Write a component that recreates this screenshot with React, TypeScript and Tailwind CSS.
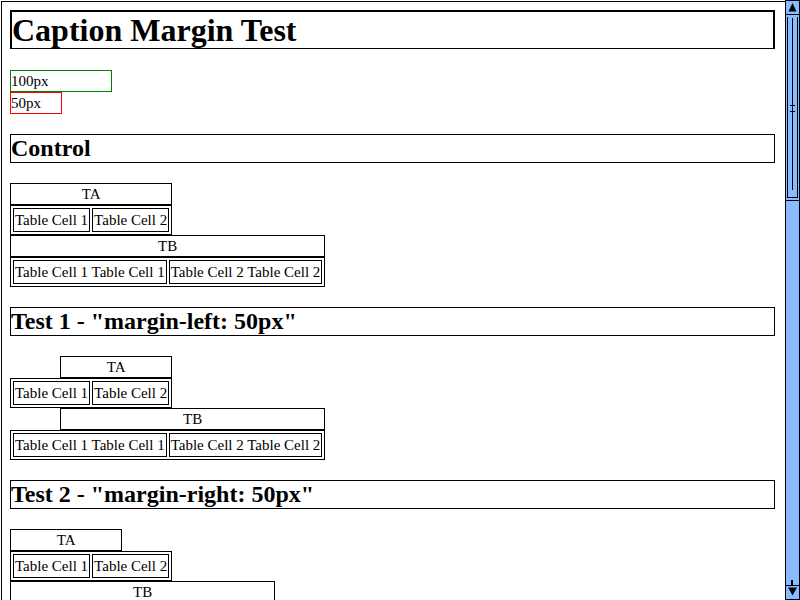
type CaptionMode = 'none' | 'left' | 'right';

const sections: { title: string; mode: CaptionMode }[] = [
  { title: 'Control', mode: 'none' },
  { title: 'Test 1 - "margin-left: 50px"', mode: 'left' },
  { title: 'Test 2 - "margin-right: 50px"', mode: 'right' },
];

const tables = [
  { caption: 'TA', cells: ['Table Cell 1', 'Table Cell 2'] },
  { caption: 'TB', cells: ['Table Cell 1 Table Cell 1', 'Table Cell 2 Table Cell 2'] },
];

function CaptionedTable({
  caption,
  cells,
  mode,
}: {
  caption: string;
  cells: string[];
  mode: CaptionMode;
}) {
  const margin = mode === 'left' ? 'ml-[50px]' : mode === 'right' ? 'mr-[50px]' : '';

  return (
    <div className="flex w-fit flex-col">
      <div className={`h-[22px] border border-black text-center leading-[20px] ${margin}`}>
        {caption}
      </div>
      <table className="border-separate border-spacing-[2px] border border-black">
        <tbody>
          <tr>
            {cells.map((cell, i) => (
              <td key={i} className="border border-black p-px leading-[20px] whitespace-nowrap">
                {cell}
              </td>
            ))}
          </tr>
        </tbody>
      </table>
    </div>
  );
}

function Scrollbar() {
  return (
    <div className="flex h-[600px] w-[15px] shrink-0 flex-col border border-black bg-[#88bbff]">
      {/* up button */}
      <div className="h-[14px] shrink-0 border-b border-black">
        <svg width="13" height="13" viewBox="0 0 13 13" className="block">
          <polygon points="2.5,10.5 6.5,2 10.5,10.5" fill="#000" />
        </svg>
      </div>

      {/* thumb */}
      <div className="h-[186px] shrink-0 border-b border-black">
        <svg width="13" height="185" viewBox="0 0 13 185" className="block" shapeRendering="crispEdges">
          <rect x="1" y="2" width="1" height="181" fill="#000" />
          <rect x="11" y="2" width="1" height="181" fill="#000" />
          <rect x="1" y="182" width="11" height="1" fill="#000" />
          <rect x="6" y="3" width="1" height="172" fill="#000" />
          <rect x="4" y="90" width="5" height="1" fill="#000" />
          <rect x="4" y="96" width="5" height="1" fill="#000" />
        </svg>
      </div>

      {/* track */}
      <div className="flex flex-1 flex-col justify-end">
        <div className="ml-[5px] h-[5px] w-[2px] bg-black" />
      </div>

      {/* down button */}
      <div className="h-[14px] shrink-0 border-t border-black">
        <svg width="13" height="13" viewBox="0 0 13 13" className="block">
          <polygon points="2,1.5 11,1.5 6.5,9.5" fill="#000" />
        </svg>
      </div>
    </div>
  );
}

export default function App() {
  return (
    <div
      className="flex h-[600px] w-[800px] overflow-hidden bg-white text-[15px] text-black"
      style={{ fontFamily: '"Liberation Serif", "Times New Roman", serif' }}
    >
      <div className="h-[600px] flex-1 pl-px pt-px">
        <div className="h-full overflow-hidden border-l border-t border-black pt-2 pr-[10px] pl-2">
          {/* ── Page title ── */}
          <h1 className="mb-[21px] border-x-2 border-t-2 border-b border-black text-[32px] font-bold leading-[36px]">
            Caption Margin Test
          </h1>

          {/* ── Legend ── */}
          <div className="mb-[20px] flex flex-col">
            <div className="h-[22px] w-[102px] border border-[#008000] leading-[20px]">100px</div>
            <div className="h-[22px] w-[52px] border border-[#ff0000] leading-[20px]">50px</div>
          </div>

          {/* ── Test sections ── */}
          {sections.map((section) => (
            <div key={section.title} className="mb-[20px]">
              <h2 className="mb-[20px] border border-black text-[24px] font-bold leading-[27px]">
                {section.title}
              </h2>
              <div className="flex flex-col items-start">
                {tables.map((t) => (
                  <CaptionedTable
                    key={t.caption}
                    caption={t.caption}
                    cells={t.cells}
                    mode={section.mode}
                  />
                ))}
              </div>
            </div>
          ))}
        </div>
      </div>

      <Scrollbar />
    </div>
  );
}
